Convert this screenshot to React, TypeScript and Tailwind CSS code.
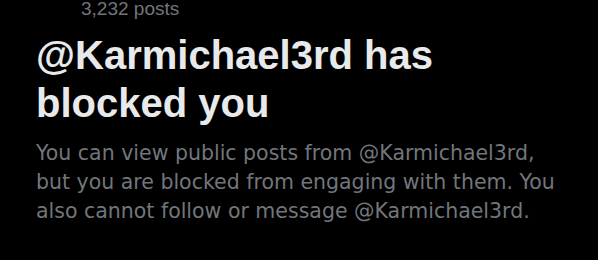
export default function App() {
  return (
    <div className="h-[260px] w-[598px] overflow-hidden bg-black font-['Liberation_Sans',Arial,sans-serif]">
      <div className="-mt-[3px] pl-[81px] text-[19px] leading-[24px] text-[#71767b]">
        3,232 posts
      </div>
      <div className="px-[36px] pt-[10px]">
        <h1 className="text-[40px] font-bold leading-[48px] text-[#e7e9ea]">
          @Karmichael3rd has blocked you
        </h1>
        <p className="mt-[12px] font-['DejaVu_Sans',sans-serif] text-[20.5px] leading-[29px] text-[#71767b]">
          You can view public posts from @Karmichael3rd, but you are blocked
          from engaging with them. You also cannot follow or message
          @Karmichael3rd.
        </p>
      </div>
    </div>
  );
}
